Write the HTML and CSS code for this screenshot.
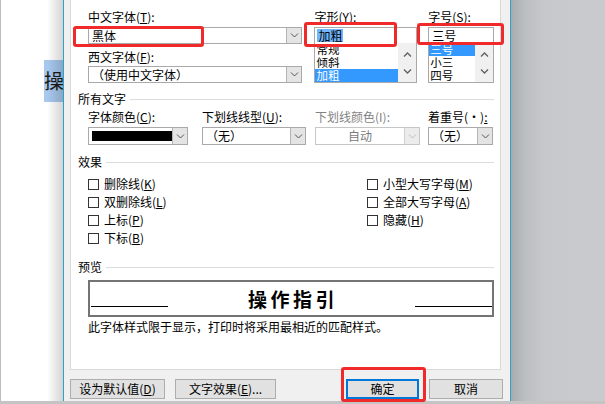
FILE: index.html
```html
<!DOCTYPE html>
<html lang="zh-CN">
<head>
<meta charset="utf-8">
<title>字体</title>
<link rel="stylesheet" href="styles.css">
</head>
<body>
<div class="screen">
  <div class="desk">
    <div class="doc">
      <div class="doc-sel">操</div>
    </div>
    <div class="dialog">
      <div class="panel">
        <div class="font-row">
          <div class="c-cn">
            <div class="lbl">中文字体(<u>T</u>):</div>
            <div class="combo"><span class="val">黑体</span><span class="dd"><svg width="9" height="5" viewBox="0 0 9 5"><path d="M1 0.5L4.5 4L8 0.5" fill="none" stroke="#555" stroke-width="1"/></svg></span></div>
            <div class="lbl lbl-2">西文字体(<u>F</u>):</div>
            <div class="combo"><span class="val">（使用中文字体）</span><span class="dd"><svg width="9" height="5" viewBox="0 0 9 5"><path d="M1 0.5L4.5 4L8 0.5" fill="none" stroke="#555" stroke-width="1"/></svg></span></div>
          </div>
          <div class="c-style">
            <div class="lbl">字形(<u>Y</u>):</div>
            <div class="edit"><span class="hl">加粗</span></div>
            <div class="list">
              <div class="items">
                <div class="item">常规</div>
                <div class="item">倾斜</div>
                <div class="item on">加粗</div>
              </div>
              <div class="sb">
                <svg width="9" height="5" viewBox="0 0 9 5"><path d="M1 4.5L4.5 1L8 4.5" fill="none" stroke="#606060" stroke-width="1.3"/></svg>
                <svg width="9" height="5" viewBox="0 0 9 5"><path d="M1 0.5L4.5 4L8 0.5" fill="none" stroke="#606060" stroke-width="1.3"/></svg>
              </div>
            </div>
          </div>
          <div class="c-size">
            <div class="lbl">字号(<u>S</u>):</div>
            <div class="edit"><span class="val">三号</span></div>
            <div class="list">
              <div class="items">
                <div class="item on">三号</div>
                <div class="item">小三</div>
                <div class="item">四号</div>
              </div>
              <div class="sb">
                <svg width="9" height="5" viewBox="0 0 9 5"><path d="M1 4.5L4.5 1L8 4.5" fill="none" stroke="#606060" stroke-width="1.3"/></svg>
                <svg width="9" height="5" viewBox="0 0 9 5"><path d="M1 0.5L4.5 4L8 0.5" fill="none" stroke="#606060" stroke-width="1.3"/></svg>
              </div>
            </div>
          </div>
        </div>

        <div class="sect sect-all">所有文字</div>
        <div class="all-row">
          <div class="a-color">
            <div class="lbl">字体颜色(<u>C</u>):</div>
            <div class="combo combo-18"><span class="swatch"></span><span class="dd"><svg width="9" height="5" viewBox="0 0 9 5"><path d="M1 0.5L4.5 4L8 0.5" fill="none" stroke="#555" stroke-width="1"/></svg></span></div>
          </div>
          <div class="a-ul">
            <div class="lbl">下划线线型(<u>U</u>):</div>
            <div class="combo combo-18"><span class="val">（无）</span><span class="dd"><svg width="9" height="5" viewBox="0 0 9 5"><path d="M1 0.5L4.5 4L8 0.5" fill="none" stroke="#555" stroke-width="1"/></svg></span></div>
          </div>
          <div class="a-ulc">
            <div class="lbl dis">下划线颜色(I):</div>
            <div class="combo combo-18 combo-dis"><span class="val center">自动</span><span class="dd"><svg width="9" height="5" viewBox="0 0 9 5"><path d="M1 0.5L4.5 4L8 0.5" fill="none" stroke="#bcbcbc" stroke-width="1"/></svg></span></div>
          </div>
          <div class="a-em">
            <div class="lbl">着重号(・)<u>:</u></div>
            <div class="combo combo-18"><span class="val">（无）</span><span class="dd"><svg width="9" height="5" viewBox="0 0 9 5"><path d="M1 0.5L4.5 4L8 0.5" fill="none" stroke="#555" stroke-width="1"/></svg></span></div>
          </div>
        </div>

        <div class="sect sect-fx">效果</div>
        <div class="fx">
          <div class="fx-col">
            <div class="cb"><span class="box"></span>删除线(<u>K</u>)</div>
            <div class="cb"><span class="box"></span>双删除线(<u>L</u>)</div>
            <div class="cb"><span class="box"></span>上标(<u>P</u>)</div>
            <div class="cb"><span class="box"></span>下标(<u>B</u>)</div>
          </div>
          <div class="fx-col">
            <div class="cb"><span class="box"></span>小型大写字母(<u>M</u>)</div>
            <div class="cb"><span class="box"></span>全部大写字母(<u>A</u>)</div>
            <div class="cb"><span class="box"></span>隐藏(<u>H</u>)</div>
          </div>
        </div>

        <div class="sect sect-pv">预览</div>
        <div class="preview">
          <span class="pv-line"></span>
          <span class="pv-text">操作指引</span>
          <span class="pv-line"></span>
        </div>
        <div class="note">此字体样式限于显示，打印时将采用最相近的匹配样式。</div>
      </div>

      <div class="btn-row">
        <div class="btn b-def">设为默认值(<u>D</u>)</div>
        <div class="btn b-fx">文字效果(<u>E</u>)...</div>
        <div class="btn b-ok">确定</div>
        <div class="btn b-cancel">取消</div>
      </div>
    </div>
    <div class="backdrop"></div>
  </div>
  <div class="strip"></div>

  <div class="mark mark-cn"></div>
  <div class="mark mark-style"></div>
  <div class="mark mark-size"></div>
  <div class="mark mark-ok"></div>
</div>
</body>
</html>
```

FILE: styles.css
```css
* { box-sizing: border-box; margin: 0; padding: 0; }

html, body {
  width: 605px;
  height: 404px;
  overflow: hidden;
}

body {
  font-family: "Noto Sans CJK SC", "Noto Sans", "Liberation Sans", sans-serif;
  font-size: 12px;
  line-height: 14px;
  color: #000;
  background: #fff;
}

u { text-decoration: underline; text-underline-offset: 1px; }

.screen {
  position: relative;
  width: 605px;
  height: 404px;
  display: flex;
  flex-direction: column;
}

.desk {
  display: flex;
  height: 401px;
}

.strip {
  height: 3px;
  background: #c4c4c4;
}

/* left document area */
.doc {
  position: relative;
  width: 63px;
  background: #fff;
  border-left: 1px solid #bdbdbd;
  padding-top: 60px;
  display: flex;
  justify-content: flex-end;
  align-items: flex-start;
}

.doc::after {
  content: "";
  position: absolute;
  top: 0;
  bottom: 0;
  right: 0;
  width: 16px;
  background: linear-gradient(to right, rgba(0,0,0,0), rgba(0,0,0,0.17));
}

.doc-sel {
  width: 19px;
  height: 42px;
  background: #a8c9ee;
  overflow: hidden;
  font-size: 20px;
  line-height: 42px;
  color: #1a1a1a;
  white-space: nowrap;
}

/* dialog */
.dialog {
  width: 448px;
  border-left: 1px solid #2aa3c5;
  border-right: 1px solid #2aa3c5;
  background: #f0f0f0;
  display: flex;
  flex-direction: column;
  padding-left: 6px;
}

.panel {
  width: 431px;
  height: 370px;
  background: #fff;
  border: 1px solid #d9d9d9;
  border-top: 0;
  padding: 10px 6px 0 7px;
}

.lbl {
  height: 14px;
  line-height: 14px;
  white-space: nowrap;
}

.lbl.dis { color: #838383; }

.font-row {
  display: flex;
  padding-left: 10px;
}

.c-cn { width: 215px; }
.c-style { width: 103px; margin-left: 12px; }
.c-size { width: 66px; margin-left: 11px; }

.font-row .lbl { margin-bottom: 3px; }
.font-row .lbl-2 { margin-top: 6px; margin-bottom: 2px; }

.combo {
  height: 17px;
  border: 1px solid #a9a9a9;
  background: #fff;
  display: flex;
  align-items: stretch;
}

.combo-18 { height: 18px; }

.val {
  flex: 1;
  padding-left: 3px;
  line-height: 15px;
  white-space: nowrap;
}

.combo-18 .val { line-height: 16px; }

.val.center { text-align: center; padding-left: 0; color: #7a7a7a; }

.dd {
  width: 15px;
  background: #e4e4e4;
  border-left: 1px solid #b4b4b4;
  display: flex;
  align-items: center;
  justify-content: center;
}

.combo-dis { border-color: #c6c6c6; }
.combo-dis .dd { background: #ececec; border-left-color: #d0d0d0; }

.edit {
  height: 17px;
  border: 1px solid #a9a9a9;
  background: #fff;
  display: flex;
  align-items: center;
}

.edit .val { line-height: 15px; }

.hl {
  margin-left: 2px;
  background: #6fb6ff;
  line-height: 13px;
  padding: 0 1px;
}

.list {
  height: 40px;
  margin-top: -1px;
  border: 1px solid #a9a9a9;
  border-top: 0;
  display: flex;
  background: #fff;
}

.items {
  flex: 1;
}

.item {
  height: 13px;
  line-height: 13px;
  font-size: 11.5px;
  padding-left: 1px;
  white-space: nowrap;
}

.item.on {
  background: #3399ff;
  color: #fff;
}

.sb {
  width: 18px;
  background: #f0f0f0;
  display: flex;
  flex-direction: column;
  align-items: center;
  justify-content: space-around;
  padding: 3px 0 2px;
}

/* section headers */
.sect {
  display: flex;
  align-items: center;
  height: 14px;
  line-height: 14px;
}

.sect::after {
  content: "";
  flex: 1;
  height: 1px;
  background: #dcdcdc;
  margin-left: 4px;
}

.sect-all { margin-top: 9px; }
.sect-fx { margin-top: 10px; }
.sect-pv { margin-top: 13px; }

.all-row {
  display: flex;
  padding-left: 10px;
  margin-top: 4px;
}

.all-row .lbl { margin-bottom: 3px; }

.a-color { width: 100px; }
.a-ul { width: 104px; margin-left: 14px; }
.a-ulc { width: 105px; margin-left: 9px; }
.a-em { width: 65px; margin-left: 8px; }

.swatch {
  flex: 1;
  margin: 3px 0 3px 3px;
  background: #000;
}

/* effects */
.fx {
  display: grid;
  grid-template-columns: 279px auto;
  padding-left: 10px;
  margin-top: 6px;
}

.cb {
  display: flex;
  align-items: center;
  height: 18px;
  white-space: nowrap;
}

.box {
  width: 11px;
  height: 11px;
  border: 1px solid #333;
  background: #fff;
  margin-right: 5px;
}

/* preview */
.preview {
  margin: 6px 0 0 10px;
  width: 406px;
  height: 37px;
  border: 2px solid #747474;
  display: flex;
  justify-content: space-between;
  align-items: flex-end;
  padding: 0 0 8px 1px;
}

.pv-line {
  width: 77px;
  height: 1px;
  background: #000;
}

.pv-text {
  align-self: center;
  margin-bottom: -8px;
  font-size: 19px;
  font-weight: 700;
  letter-spacing: 3.5px;
  line-height: 22px;
  padding-left: 3px;
}

.note {
  margin: 3px 0 0 10px;
  white-space: nowrap;
}

/* buttons */
.btn-row {
  display: flex;
  margin-top: 9px;
  height: 20px;
}

.btn {
  height: 20px;
  border: 1px solid #adadad;
  background: #e1e1e1;
  display: flex;
  align-items: center;
  justify-content: center;
  white-space: nowrap;
}

.b-def { width: 95px; }
.b-fx { width: 101px; margin-left: 10px; }
.b-ok { width: 73px; margin-left: 70px; border: 2px solid #0078d7; }
.b-cancel { width: 74px; margin-left: 10px; }

/* right backdrop */
.backdrop {
  flex: 1;
  background: linear-gradient(to right, #a7aaae 0px, #bcbfc2 14px, #c6c8cb 34px, #c9cbce 100%);
}

/* red annotation rectangles */
.mark {
  position: absolute;
  border: 3px solid #f02a2a;
  border-radius: 3px;
}

.mark-cn { left: 73px; top: 26px; width: 131px; height: 21px; }
.mark-style { left: 304px; top: 22px; width: 93px; height: 25px; }
.mark-size { left: 417px; top: 23px; width: 87px; height: 22px; }
.mark-ok { left: 341px; top: 367px; width: 85px; height: 35px; }
```
